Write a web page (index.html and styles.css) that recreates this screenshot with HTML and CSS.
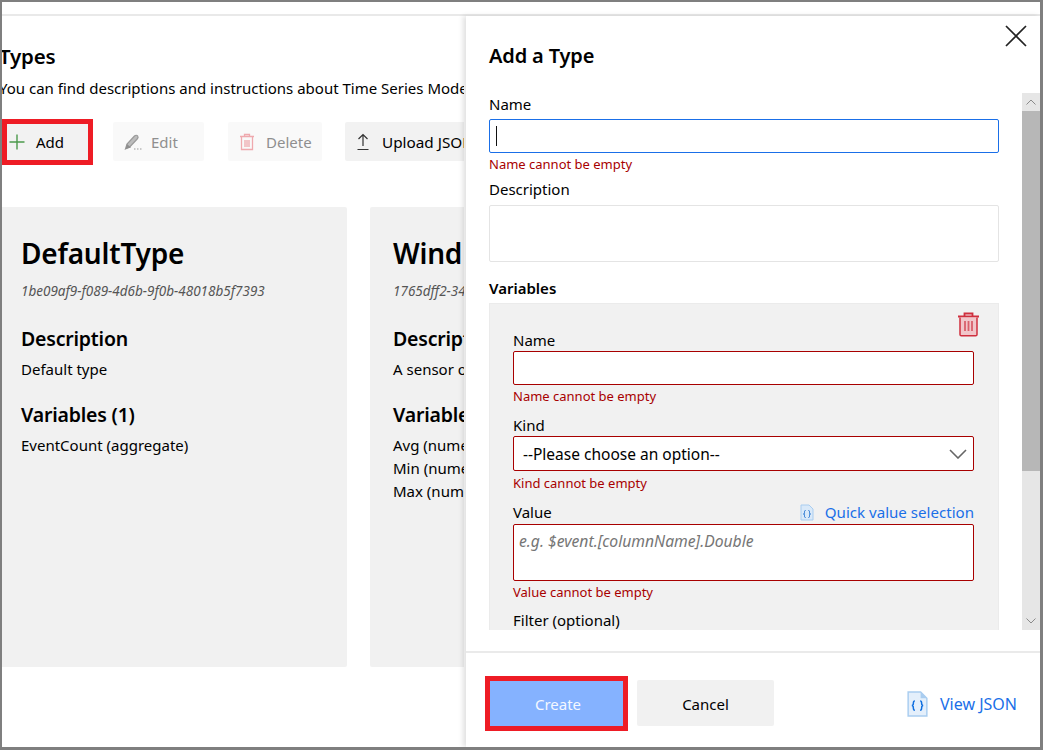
FILE: index.html
```html
<!DOCTYPE html>
<html lang="en">
<head>
<meta charset="utf-8">
<title>Add a Type</title>
<link rel="stylesheet" href="styles.css">
</head>
<body>
<div class="frame">
  <div class="topbar"></div>
  <div class="main">
    <section class="page">
      <div class="page-inner">
        <h1 class="page-title">Types</h1>
        <p class="page-desc">You can find descriptions and instructions about Time Series Model types in the documentation</p>
        <div class="toolbar">
          <button class="tbtn tbtn-add"><svg class="ico" viewBox="0 0 16 16"><path d="M8 0.5v15M0.5 8h15" stroke="#4c9a4c" stroke-width="1.4" fill="none"/></svg>Add</button>
          <button class="tbtn tbtn-edit is-off"><svg class="ico" viewBox="0 0 18 18"><path d="M1.500 16l1.500-5 7.500-8c1-1 2.500-1 3.200 0s.5 2-.5 3l-7.500 8z" fill="#bdbdbd" stroke="#9a9a9a" stroke-width="1.200"/><path d="M1.500 16l1.500-5 4 3.500z" fill="#8f8f8f"/><path d="M10 16h1.500M13 16h1.500M16 16h1.500" stroke="#9a9a9a" stroke-width="1.200"/></svg>Edit</button>
          <button class="tbtn tbtn-del is-off"><svg class="ico" viewBox="0 0 16 18"><path d="M1 3.500h14M5.500 3V1.500h5V3M2.500 4v12.500h11V4M6 7v7M8 7v7M10 7v7" fill="none" stroke="#efa9ae" stroke-width="1.300"/></svg>Delete</button>
          <button class="tbtn tbtn-up"><svg class="ico" viewBox="0 0 14 18"><path d="M7 13V1.500M2.500 6L7 1.500 11.500 6M1.500 16.500h11" fill="none" stroke="#333" stroke-width="1.200"/></svg>Upload JSON</button>
        </div>
        <div class="cards">
          <article class="card card-first">
            <h2 class="card-title">DefaultType</h2>
            <div class="card-id">1be09af9-f089-4d6b-9f0b-48018b5f7393</div>
            <h3 class="card-head">Description</h3>
            <p class="card-text">Default type</p>
            <h3 class="card-head">Variables (1)</h3>
            <p class="card-text">EventCount (aggregate)</p>
          </article>
          <article class="card">
            <h2 class="card-title">WindFarmSensor</h2>
            <div class="card-id">1765dff2-34a1-4c2e-9d70-5b8e2f6a1c04</div>
            <h3 class="card-head">Description</h3>
            <p class="card-text">A sensor on a wind farm turbine</p>
            <h3 class="card-head">Variables (3)</h3>
            <p class="card-text">Avg (numeric)<br>Min (numeric)<br>Max (numeric)</p>
          </article>
        </div>
      </div>
    </section>
    <aside class="panel">
      <button class="close" aria-label="Close"><svg viewBox="0 0 22 22"><path d="M1 1l20 20M21 1L1 21" stroke="#222" stroke-width="1.700" fill="none"/></svg></button>
      <h2 class="panel-title">Add a Type</h2>
      <div class="scroller">
        <div class="form">
          <label class="lbl">Name</label>
          <div class="input input-focus"><span class="caret"></span></div>
          <div class="err err-name">Name cannot be empty</div>
          <label class="lbl lbl-desc">Description</label>
          <div class="input input-desc"></div>
          <div class="vars-title">Variables</div>
          <div class="vars">
            <div class="vars-del"><svg viewBox="0 0 23 25"><path d="M1 4.500h21M7.500 4V1.500h8V4" fill="none" stroke="#cf2f3e" stroke-width="1.800"/><path d="M3 5.500v17c0 .8.500 1.300 1.300 1.300h14.400c.8 0 1.300-.5 1.300-1.300v-17" fill="#f1c6ca" stroke="#cf2f3e" stroke-width="1.500"/><path d="M8 9v10M11.500 9v10M15 9v10" stroke="#d9606c" stroke-width="1.800"/></svg></div>
            <label class="lbl lbl-v">Name</label>
            <div class="input input-err input-vname"></div>
            <div class="err">Name cannot be empty</div>
            <label class="lbl lbl-v2">Kind</label>
            <div class="input input-err input-kind"><span>--Please choose an option--</span><svg class="chev" viewBox="0 0 18 10"><path d="M1 1l8 8 8-8" fill="none" stroke="#666" stroke-width="1.600"/></svg></div>
            <div class="err err-kind">Kind cannot be empty</div>
            <div class="value-row">
              <label class="lbl">Value</label>
              <a class="link quick"><svg class="doc doc-s" viewBox="0 0 14 17"><path d="M1 1h8l4 4v11H1z" fill="#d9e9f9" stroke="#a9cdf0"/><path d="M5.500 6.500c-1 0-1 .5-1 2s-.5 1.500-1 1.500c.5 0 1 0 1 1.500s0 2 1 2M8.500 6.500c1 0 1 .5 1 2s.5 1.500 1 1.500c-.5 0-1 0-1 1.500s0 2-1 2" fill="none" stroke="#1a6fd0"/></svg>Quick value selection</a>
            </div>
            <div class="input input-err input-val">e.g. $event.[columnName].Double</div>
            <div class="err">Value cannot be empty</div>
            <label class="lbl lbl-filter">Filter (optional)</label>
          </div>
        </div>
        <div class="sbar">
          <div class="sbtn"><svg viewBox="0 0 10 6"><path d="M.5 5.500L5 1l4.500 4.500" fill="none" stroke="#8a8a8a"/></svg></div>
          <div class="sthumb"></div>
          <div class="strack"></div>
          <div class="sbtn"><svg viewBox="0 0 10 6"><path d="M.5.500L5 5 9.500.5" fill="none" stroke="#8a8a8a"/></svg></div>
        </div>
      </div>
      <footer class="panel-foot">
        <button class="btn btn-create">Create</button>
        <button class="btn btn-cancel">Cancel</button>
        <a class="link view"><svg class="doc doc-l" viewBox="0 0 20 25"><path d="M1 1h12l6 6v17H1z" fill="#e4effb" stroke="#a9cdf0" stroke-width="1.400"/><path d="M13 1v6h6" fill="#a9cdf0"/><path d="M7.500 9.500c-1.500 0-1.500 1-1.500 2.500s-.5 2-1.500 2c1 0 1.500.5 1.500 2s0 2.500 1.500 2.500M12.500 9.500c1.500 0 1.500 1 1.500 2.500s.5 2 1.500 2c-1 0-1.500.5-1.500 2s0 2.500-1.500 2.500" fill="none" stroke="#0f6fe0" stroke-width="1.400"/></svg>View JSON</a>
      </footer>
    </aside>
  </div>
</div>
</body>
</html>
```

FILE: styles.css
```css
* { box-sizing: border-box; }
html, body { margin: 0; height: 100%; }
body {
  font-family: "Noto Sans", "Open Sans", sans-serif;
  color: #000;
  background: #fff;
  overflow: hidden;
}
.frame {
  width: 1043px;
  height: 750px;
  border: solid #7f7f7f;
  border-width: 2px 3px 3px 2px;
  display: flex;
  flex-direction: column;
  overflow: hidden;
}
.topbar { height: 14px; flex: none; border-bottom: 2px solid #e9e9e9; }
.main { flex: 1; display: flex; min-height: 0; }

.page { width: 462px; flex: none; overflow: hidden; }
.page-inner { margin-left: -3px; width: 900px; }
.page-title { margin: 25px 0 0; font-size: 20.500px; line-height: 30px; font-weight: 600; letter-spacing: -.2px; }
.page-desc { margin: 4px 0 0; font-size: 15px; line-height: 26px; white-space: nowrap; }
.toolbar { display: flex; margin-top: 21px; padding-left: 3px; height: 39px; }
.tbtn {
  height: 39px;
  border: 0;
  border-radius: 2px;
  padding: 0;
  font: 15px "Noto Sans", sans-serif;
  color: #000;
  background: #f2f2f2;
  display: flex;
  align-items: center;
  flex: none;
}
.is-off { background: #f9f9f9; color: #8f8f8f; }
.ico { flex: none; }
.tbtn-add { width: 91px; height: 46px; margin: -3px 0; border: 5px solid #ee1c25; border-radius: 0; padding-left: 2px; }
.tbtn-add .ico { width: 16px; height: 16px; margin-right: 11px; }
.tbtn-edit { width: 91px; margin-left: 20px; padding-left: 11px; }
.tbtn-edit .ico { width: 18px; height: 18px; margin-right: 9px; }
.tbtn-del { width: 94px; margin-left: 24px; padding-left: 11px; }
.tbtn-del .ico { width: 16px; height: 18px; margin-right: 11px; }
.tbtn-up { width: 130px; margin-left: 23px; padding-left: 11px; font-size: 15.300px; }
.tbtn-up .ico { width: 14px; height: 18px; margin-right: 12px; }

.cards { display: flex; margin-top: 46px; gap: 23px; }
.card { width: 345px; height: 460px; flex: none; background: #f1f1f1; border-radius: 2px; padding: 24px 0 0 23px; }
.card-first { width: 348px; padding-left: 22px; }
.card-title { margin: 0; font-size: 28px; line-height: 44px; font-weight: 600; letter-spacing: -.2px; }
.card-id { margin-top: 7px; font-size: 13.500px; line-height: 18px; font-style: italic; color: #555; }
.card-head { margin: 25px 0 0; font-size: 19.500px; line-height: 27px; font-weight: 600; letter-spacing: -.2px; }
.card-text { margin: 6px 0 0; font-size: 15px; line-height: 23px; }
.card-text + .card-head { margin-top: 19.500px; }

.panel {
  flex: 1;
  min-width: 0;
  margin-left: 2px;
  display: flex;
  flex-direction: column;
  position: relative;
  background: #fff;
  box-shadow: -3px 0 5px rgba(0,0,0,.12);
}
.close { position: absolute; top: 9px; right: 13px; width: 22px; height: 22px; padding: 0; border: 0; background: none; }
.close svg { display: block; width: 22px; height: 22px; }
.panel-title { margin: 25px 0 0 23px; font-size: 20px; line-height: 30px; font-weight: 600; letter-spacing: -.15px; flex: none; }
.scroller { margin-top: 22px; height: 537px; flex: none; display: flex; overflow: hidden; }
.form { width: 556px; flex: none; padding-left: 23px; padding-right: 23px; }
.lbl { display: block; font-size: 15px; line-height: 20px; }
.form > .lbl:first-child { margin-top: 1px; }
.input { background: #fff; border: 1px solid #e4e4e4; border-radius: 2px; }
.input-focus { height: 34px; margin-top: 5px; border: 1px solid #1a6fe8; display: flex; align-items: center; padding-left: 6px; }
.caret { width: 1px; height: 20px; background: #111; }
.err { font-size: 13px; line-height: 18px; color: #a80000; margin-top: 2px; }
.lbl-desc { margin-top: 6px; }
.input-desc { height: 57px; margin-top: 6px; }
.vars-title { margin-top: 16px; font-size: 15px; line-height: 20px; font-weight: 600; }
.vars { position: relative; margin-top: 5px; height: 340px; background: #f1f1f1; border: 1px solid #ebebeb; border-bottom: 0; padding: 0 24px 0 23px; }
.vars .err-kind { margin-top: 3px; }
.vars-del { position: absolute; top: 8px; right: 18px; width: 23px; height: 25px; }
.vars-del svg { display: block; width: 23px; height: 25px; }
.lbl-v { padding-top: 26px; height: 46px; }
.input-err { border: 1px solid #a80000; }
.input-vname { height: 34px; margin-top: 1px; }
.lbl-v2 { margin-top: 10px; }
.input-kind { height: 35px; margin-top: 1px; display: flex; align-items: center; justify-content: space-between; padding: 1px 6px 0 9px; font-size: 15.500px; }
.chev { width: 18px; height: 10px; }
.value-row { display: flex; justify-content: space-between; align-items: center; margin-top: 10px; height: 20px; }
.link { color: #1a6fe8; font-size: 15.100px; display: flex; align-items: center; }
.doc { flex: none; }
.doc-s { width: 14px; height: 17px; margin-right: 11px; }
.input-val { height: 57px; margin-top: 2px; padding: 6px 5px; font-size: 15.700px; line-height: 20px; font-style: italic; color: #767676; }
.lbl-filter { margin-top: 9px; }

.sbar { width: 18px; flex: none; display: flex; flex-direction: column; background: #e6e6e6; }
.sbtn { height: 18px; flex: none; display: flex; align-items: center; justify-content: center; background: #e6e6e6; }
.sbtn svg { width: 10px; height: 6px; }
.sthumb { height: 360px; flex: none; background: #b7b7b7; }
.strack { flex: 1; }

.panel-foot { flex: 1; margin-top: 21px; border-top: 2px solid #eaeaea; display: flex; align-items: flex-start; padding: 23px 0 0 19px; }
.btn { height: 46px; border: 0; border-radius: 2px; font: 15px "Noto Sans", sans-serif; flex: none; padding: 0; }
.btn-create { width: 143px; height: 55px; background: #85b2ff; color: #f4f8ff; border: 5px solid #ee1c25; border-radius: 0; padding-left: 3px; }
.btn-cancel { width: 137px; margin-left: 9px; margin-top: 4px; padding-top: 1px; background: #f1f1f1; color: #000; }
.view { margin-left: auto; margin-right: 23px; margin-top: 15px; font-size: 16px; }
.doc-l { width: 21px; height: 26px; margin-right: 12px; }
```
